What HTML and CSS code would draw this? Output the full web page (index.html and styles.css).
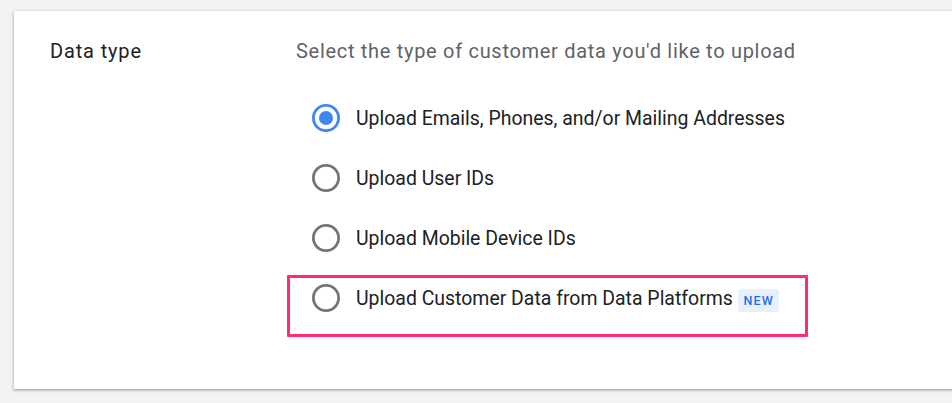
FILE: index.html
```html
<!DOCTYPE html>
<html>
<head>
<meta charset="utf-8">
<link rel="stylesheet" href="styles.css">
</head>
<body>
<div class="card">
  <div class="label">Data type</div>
  <div class="field">
    <div class="hint">Select the type of customer data you'd like to upload</div>
    <div class="options">
      <div class="option">
        <svg class="radio" width="28" height="28" viewBox="0 0 28 28"><circle cx="14" cy="14" r="12.6" fill="none" stroke="#4285f4" stroke-width="2.8"/><circle cx="14" cy="14" r="7" fill="#4285f4"/></svg>
        <span class="opt-text">Upload Emails, Phones, and/or Mailing Addresses</span>
      </div>
      <div class="option">
        <svg class="radio" width="28" height="28" viewBox="0 0 28 28"><circle cx="14" cy="14" r="12.6" fill="none" stroke="#757575" stroke-width="2.8"/></svg>
        <span class="opt-text">Upload User IDs</span>
      </div>
      <div class="option">
        <svg class="radio" width="28" height="28" viewBox="0 0 28 28"><circle cx="14" cy="14" r="12.6" fill="none" stroke="#757575" stroke-width="2.8"/></svg>
        <span class="opt-text">Upload Mobile Device IDs</span>
      </div>
      <div class="option highlighted">
        <svg class="radio" width="28" height="28" viewBox="0 0 28 28"><circle cx="14" cy="14" r="12.6" fill="none" stroke="#757575" stroke-width="2.8"/></svg>
        <span class="opt-text">Upload Customer Data from Data Platforms</span>
        <span class="badge">NEW</span>
      </div>
    </div>
  </div>
</div>
</body>
</html>
```
FILE: styles.css
```css
html, body {
  margin: 0;
  padding: 0;
}
body {
  background: #f1f3f4;
  padding: 11px 0 0 14px;
  overflow: hidden;
  font-family: Roboto, "Liberation Sans", sans-serif;
  height: 403px;
  box-sizing: border-box;
}
.card {
  background: #fff;
  width: calc(100% + 20px);
  box-sizing: border-box;
  height: 378px;
  padding: 28px 0 0 36px;
  display: flex;
  box-shadow: 0 1px 2px rgba(60, 64, 67, 0.35), 0 1px 3px 1px rgba(60, 64, 67, 0.15);
}
.label {
  width: 246px;
  flex: none;
  font-size: 20px;
  letter-spacing: 0.85px;
  line-height: 24px;
  color: #202124;
}
.field {
  flex: 1;
}
.hint {
  font-size: 20px;
  letter-spacing: 0.7px;
  line-height: 24px;
  color: #5f6368;
}
.options {
  margin-top: 25px;
  padding-left: 16px;
}
.option {
  height: 60px;
  display: flex;
  align-items: center;
  position: relative;
}
.radio {
  flex: none;
  margin-right: 16px;
}
.opt-text {
  font-size: 19.45px;
  line-height: 24px;
  padding-top: 2px;
  color: #202124;
}
.badge {
  margin-left: 5px;
  margin-top: 5px;
  background: #e8f0fe;
  color: #1a73e8;
  font-size: 12.5px;
  font-weight: 500;
  letter-spacing: 1.2px;
  height: 23px;
  line-height: 23px;
  width: 41px;
  text-align: center;
  border-radius: 3px;
  box-sizing: border-box;
  padding-left: 1px;
}
.highlighted::after {
  content: "";
  position: absolute;
  left: -25px;
  top: 7px;
  width: 521px;
  height: 62px;
  box-sizing: border-box;
  border: 3px solid #ff2d6e;
  border-radius: 1px;
  pointer-events: none;
}
```
